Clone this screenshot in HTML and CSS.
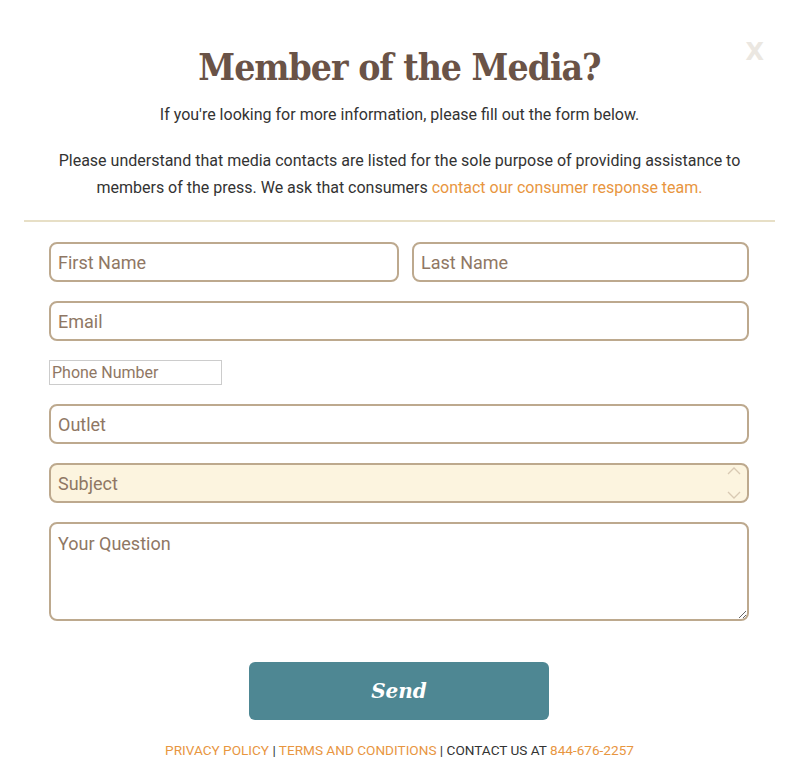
FILE: index.html
```html
<!DOCTYPE html>
<html>
<head>
<meta charset="utf-8">
<link rel="stylesheet" href="styles.css">
</head>
<body>
<div class="modal">
  <span class="close">X</span>
  <header class="intro">
    <h1 class="title">Member of the Media?</h1>
    <p class="lead">If you're looking for more information, please fill out the form below.</p>
    <p class="note">Please understand that media contacts are listed for the sole purpose of providing assistance to members of the press. We ask that consumers <a href="#" class="link">contact our consumer response team.</a></p>
  </header>
  <hr class="divider">
  <form class="form">
    <div class="row">
      <input class="field" type="text" placeholder="First Name">
      <input class="field" type="text" placeholder="Last Name">
    </div>
    <input class="field" type="email" placeholder="Email">
    <div class="phone-row"><input class="phone" type="text" placeholder="Phone Number"></div>
    <input class="field" type="text" placeholder="Outlet">
    <div class="select">
      <span class="select-label">Subject</span>
      <svg class="arrows" width="14" height="34" viewBox="0 0 14 34"><path d="M1 8 L7 2 L13 8" fill="none" stroke="#d9c9b3" stroke-width="1.3"/><path d="M1 26 L7 32 L13 26" fill="none" stroke="#d9c9b3" stroke-width="1.3"/></svg>
    </div>
    <textarea class="field area" placeholder="Your Question"></textarea>
    <div class="actions"><button type="button" class="send">Send</button></div>
  </form>
  <footer class="foot">
    <a href="#" class="link">PRIVACY POLICY</a> | <a href="#" class="link">TERMS AND CONDITIONS</a> | CONTACT US AT <a href="#" class="link">844-676-2257</a>
  </footer>
</div>
</body>
</html>
```
FILE: styles.css
```css
* { box-sizing: border-box; }
html, body { margin: 0; padding: 0; background: #fff; }
body { font-family: Roboto, "Liberation Sans", sans-serif; color: #333; }
.modal { position: relative; width: 799px; padding: 0 24px; }
.close {
  position: absolute; right: 35px; top: 38px;
  font-family: "DejaVu Sans", sans-serif; font-weight: bold; font-size: 24px;
  color: #ebe7e1;
}
.intro { text-align: center; padding-top: 44px; }
.title {
  margin: 0; font-family: "DejaVu Serif", serif; font-weight: bold; font-stretch: condensed;
  font-size: 37px; line-height: 46px; color: #6a5347; letter-spacing: -1px;
}
.lead { margin: 13px 0 0; font-size: 16px; line-height: 24px; }
.note { margin: 20px auto 0; font-size: 16px; line-height: 27px; width: 700px; }
.link { color: #e8963f; text-decoration: none; }
.divider { border: 0; height: 2px; background: #e7dfc6; margin: 19px 0 0; }
.form { width: 700px; margin: 20px 0 0 25px; display: flex; flex-direction: column; gap: 19px; }
.row { display: flex; gap: 13px; }
.row .field:first-child { width: 350px; }
.row .field:last-child { flex: 1; }
.field {
  display: block; width: 100%; height: 40px; border: 2px solid #bda98e; border-radius: 8px;
  padding: 0 7px; font-family: Roboto, "Liberation Sans", sans-serif; font-size: 18px; color: #8c7461;
  background: #fff; outline: none;
}
.field::placeholder { color: #8f7764; opacity: 1; }
.phone-row { height: 25px; }
.phone {
  display: block; width: 173px; height: 25px; border: 1px solid #ccc; padding: 0 2px;
  font-family: Roboto, "Liberation Sans", sans-serif; font-size: 16px; outline: none;
}
.phone::placeholder { color: #8f7764; opacity: 1; }
.select {
  height: 40px; border: 2px solid #bda98e; border-radius: 8px; background: #fcf4df;
  display: flex; align-items: center; justify-content: space-between; padding: 0 6px 0 7px;
  font-size: 18px; color: #8f7764;
}
.arrows { display: block; }
.area { height: 99px; padding-top: 9px; resize: vertical; }
.actions { display: flex; justify-content: center; margin-top: 22px; }
.send {
  width: 300px; height: 58px; border: 0; border-radius: 6px; background: #4e8793;
  color: #fff; font-family: "DejaVu Serif", serif; font-style: italic; font-weight: bold; font-size: 20px;
}
.foot { text-align: center; font-size: 13.6px; margin-top: 22px; color: #333; }
```
